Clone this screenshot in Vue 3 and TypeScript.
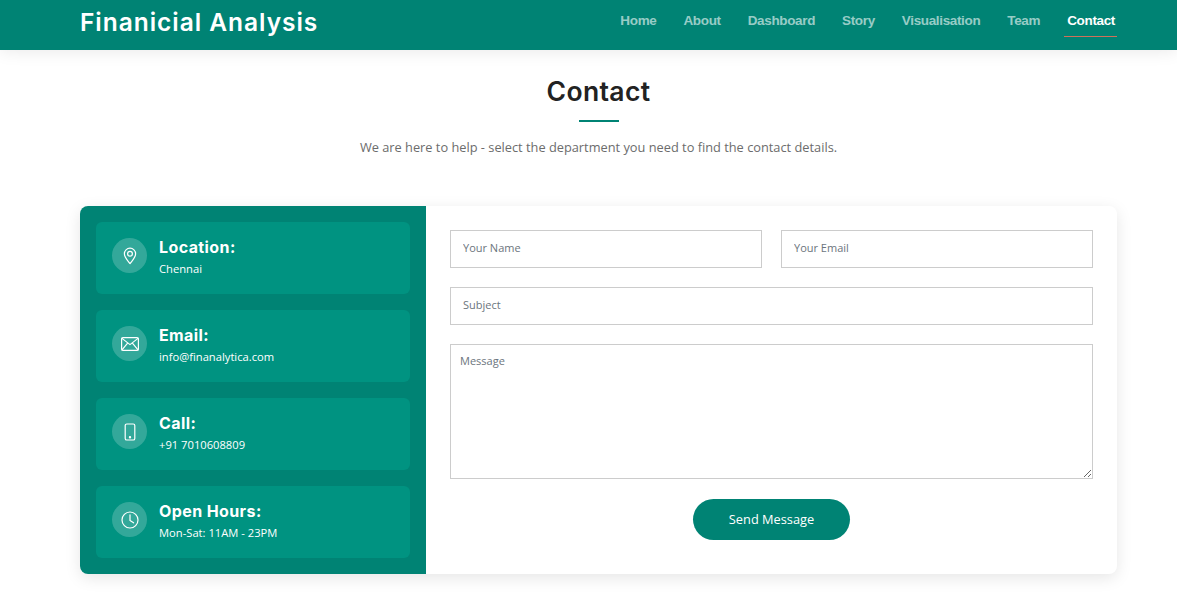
<script setup lang="ts">
const navLinks = ['Home', 'About', 'Dashboard', 'Story', 'Visualisation', 'Team', 'Contact']

const infos = [
  { id: 'pin', title: 'Location:', text: 'Chennai' },
  { id: 'mail', title: 'Email:', text: 'info@finanalytica.com' },
  { id: 'phone', title: 'Call:', text: '+91 7010608809' },
  { id: 'clock', title: 'Open Hours:', text: 'Mon-Sat: 11AM - 23PM' },
]
</script>

<template>
  <div class="page">
    <header class="topbar">
      <div class="logo">Finanicial Analysis</div>
      <nav class="nav">
        <a v-for="link in navLinks" :key="link" class="nav-link" :class="{ active: link === 'Contact' }">{{ link }}</a>
      </nav>
    </header>

    <main class="container">
      <section class="heading">
        <h2>Contact</h2>
        <div class="rule"></div>
        <p>We are here to help - select the department you need to find the contact details.</p>
      </section>

      <div class="panel">
        <aside class="side">
          <div v-for="info in infos" :key="info.id" class="info">
            <div class="icon">
              <svg width="20" height="20" viewBox="0 0 20 20" fill="none" stroke="#fff" stroke-width="1.2" stroke-linecap="round" stroke-linejoin="round">
                <template v-if="info.id === 'pin'">
                  <path d="M10 17.6 C8 14.8 4.4 11.6 4.4 7.8 a5.6 5.6 0 0 1 11.2 0 C15.6 11.6 12 14.8 10 17.6 Z" />
                  <circle cx="10" cy="7.8" r="2.4" />
                </template>
                <template v-else-if="info.id === 'mail'">
                  <rect x="1.6" y="3.6" width="16.8" height="12.8" rx="1.4" />
                  <path d="M2 4.4 10 10.6 18 4.4 M2 15.8 7.6 9.2 M18 15.8 12.4 9.2" />
                </template>
                <template v-else-if="info.id === 'phone'">
                  <rect x="5.2" y="2" width="9.6" height="16" rx="1.6" />
                  <circle cx="10" cy="15.2" r="0.6" fill="#fff" />
                </template>
                <template v-else>
                  <circle cx="10" cy="10" r="8" />
                  <path d="M10 4.8 V10.4 L13.6 12.8" />
                </template>
              </svg>
            </div>
            <div class="info-text">
              <h4>{{ info.title }}</h4>
              <p>{{ info.text }}</p>
            </div>
          </div>
        </aside>

        <form class="form" @submit.prevent>
          <div class="row">
            <input type="text" placeholder="Your Name" />
            <input type="email" placeholder="Your Email" />
          </div>
          <input type="text" placeholder="Subject" />
          <textarea placeholder="Message"></textarea>
          <button type="submit">Send Message</button>
        </form>
      </div>
    </main>
  </div>
</template>

<style>
html,
body {
  margin: 0;
  background: #fff;
}
</style>

<style scoped>
.page {
  height: 616px;
  overflow: hidden;
  font-family: "Open Sans", sans-serif;
  color: #444;
}

.topbar {
  height: 50px;
  background: #008374;
  display: flex;
  justify-content: space-between;
  padding: 0 62px 0 80px;
  box-shadow: 0 0 18px rgba(0, 0, 0, 0.1);
}

.logo {
  font-family: Inter, sans-serif;
  font-size: 24.5px;
  font-weight: 600;
  line-height: 44px;
  letter-spacing: 0.97px;
  color: #fff;
}

.nav {
  display: flex;
  gap: 27px;
  height: 37px;
}

.nav-link {
  font-family: "Liberation Sans", sans-serif;
  font-size: 13.5px;
  font-weight: 700;
  line-height: 42px;
  letter-spacing: -0.35px;
  color: rgba(255, 255, 255, 0.6);
}

.nav-link.active {
  color: #fff;
  padding: 0 2px 0 3px;
  margin: 0 -2px 0 -3px;
  border-bottom: 1px solid #d0705a;
}

.container {
  margin: 0 60px 0 80px;
}

.heading {
  text-align: center;
  padding-top: 24px;
  height: 132px;
}

.heading h2 {
  margin: 0;
  font-family: Inter, sans-serif;
  font-size: 26.5px;
  font-weight: 600;
  line-height: 35px;
  letter-spacing: 0.35px;
  color: #222;
}

.rule {
  width: 40px;
  height: 2px;
  margin: 11px auto 0;
  background: #008374;
}

.heading p {
  margin: 16px 0 0;
  font-size: 12.8px;
  line-height: 18px;
  color: #6c6c6c;
}

.panel {
  height: 368px;
  display: flex;
  background: #fff;
  border-radius: 8px;
  box-shadow: 0 4px 16px rgba(0, 0, 0, 0.1);
  overflow: hidden;
}

.side {
  width: 346px;
  box-sizing: border-box;
  padding: 16px;
  background: #008374;
  display: flex;
  flex-direction: column;
  gap: 16px;
}

.info {
  height: 72px;
  box-sizing: border-box;
  padding: 16px;
  display: flex;
  gap: 12px;
  background: #009381;
  border-radius: 6px;
}

.icon {
  width: 35px;
  height: 35px;
  flex: none;
  border-radius: 50%;
  background: rgba(255, 255, 255, 0.2);
  display: flex;
  align-items: center;
  justify-content: center;
}

.info-text h4 {
  margin: 0;
  font-family: Inter, sans-serif;
  font-size: 16px;
  font-weight: 700;
  line-height: 19px;
  letter-spacing: 0.4px;
  color: #fff;
}

.info-text p {
  margin: 4px 0 0;
  font-size: 11.2px;
  line-height: 15px;
  color: #fff;
}

.form {
  flex: 1;
  padding: 24px;
  display: flex;
  flex-direction: column;
  gap: 19px;
}

.row {
  display: flex;
  gap: 19px;
}

input,
textarea {
  box-sizing: border-box;
  width: 100%;
  border: 1px solid #ccc;
  border-radius: 0;
  padding: 0 12px 4px;
  font-family: "Open Sans", sans-serif;
  font-size: 11px;
  background: #fff;
  outline: none;
}

input {
  height: 38px;
}

textarea {
  height: 135px;
  padding: 8px 9px;
  line-height: 16px;
}

input::placeholder,
textarea::placeholder {
  color: #6c757d;
  opacity: 1;
}

button {
  align-self: center;
  width: 157px;
  height: 41px;
  margin-top: 1px;
  padding: 0 0 2px;
  border: none;
  border-radius: 21px;
  background: #008374;
  color: #fff;
  font-family: "Open Sans", sans-serif;
  font-size: 12.8px;
}
</style>
